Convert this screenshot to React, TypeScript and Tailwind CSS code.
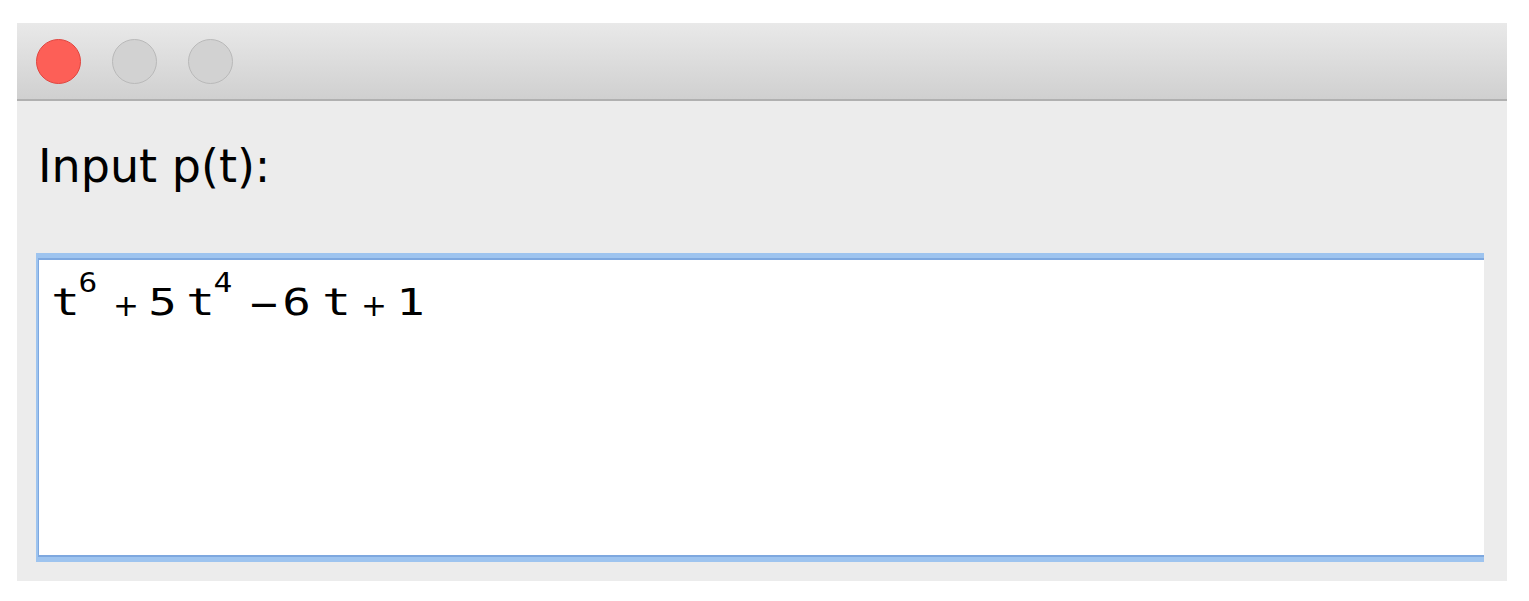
import React from "react";

const mono = { fontFamily: '"DejaVu Sans Mono", monospace' };
const sans = { fontFamily: '"DejaVu Sans", sans-serif' };

export default function App() {
  return (
    <div className="w-[1529px] h-[601px] bg-white pt-[23px] pl-[17px]">
      <div className="w-[1490px] h-[558px] bg-[#ececec] flex flex-col">
        <div className="h-[78px] shrink-0 bg-gradient-to-b from-[#e9e9e9] to-[#d0d0d0] border-b-2 border-[#b0b0b0] flex items-center pl-[19px] gap-[31px]">
          <div className="w-[45px] h-[45px] rounded-full bg-[#fd5f57] border border-[#e0453f]" />
          <div className="w-[45px] h-[45px] rounded-full bg-[#d2d2d2] border border-[#b9b9b9]" />
          <div className="w-[45px] h-[45px] rounded-full bg-[#d2d2d2] border border-[#b9b9b9]" />
        </div>
        <div className="mt-[42px] ml-[21px] text-[46px] leading-[46px] text-black" style={sans}>
          Input p(t):
        </div>
        <div className="mt-[64px] ml-[19px] w-[1448px] h-[309px] bg-[#9ec4ef] pt-[5px] pl-[2px] pb-[5px]">
          <div className="h-full bg-white border-t-2 border-l border-b-2 border-[#7ea8df] pt-[18px] pl-[13px]">
            <div className="text-[38px] leading-[48px] text-black whitespace-nowrap" style={mono}>
              <span className="inline-block w-[26px] text-center"><span className="inline-block scale-x-[1.25]">t</span></span>
              <span className="inline-block w-[19px] text-center text-[26px] leading-[0px] align-[23px]"><span className="inline-block scale-x-[1.2]">6</span></span>
              <span className="inline-block ml-[16px] w-[24px] text-center text-[31px] leading-[0px] align-[-1px]" style={sans}>+</span>
              <span className="inline-block ml-[11px] w-[28px] text-center"><span className="inline-block scale-x-[1.25]">5</span></span>
              <span className="inline-block ml-[11px] w-[27px] text-center"><span className="inline-block scale-x-[1.25]">t</span></span>
              <span className="inline-block w-[17px] text-center text-[26px] leading-[0px] align-[23px]"><span className="inline-block scale-x-[1.2]">4</span></span>
              <span className="inline-block ml-[17px] w-[29px] text-center text-[38px] leading-[0px] align-[-2px]" style={sans}>−</span>
              <span className="inline-block ml-[6px] w-[27px] text-center"><span className="inline-block scale-x-[1.25]">6</span></span>
              <span className="inline-block ml-[12px] w-[28px] text-center"><span className="inline-block scale-x-[1.25]">t</span></span>
              <span className="inline-block ml-[11px] w-[25px] text-center text-[31px] leading-[0px] align-[-1px]" style={sans}>+</span>
              <span className="inline-block ml-[10px] w-[28px] text-center"><span className="inline-block scale-x-[1.25]">1</span></span>
            </div>
          </div>
        </div>
      </div>
    </div>
  );
}
